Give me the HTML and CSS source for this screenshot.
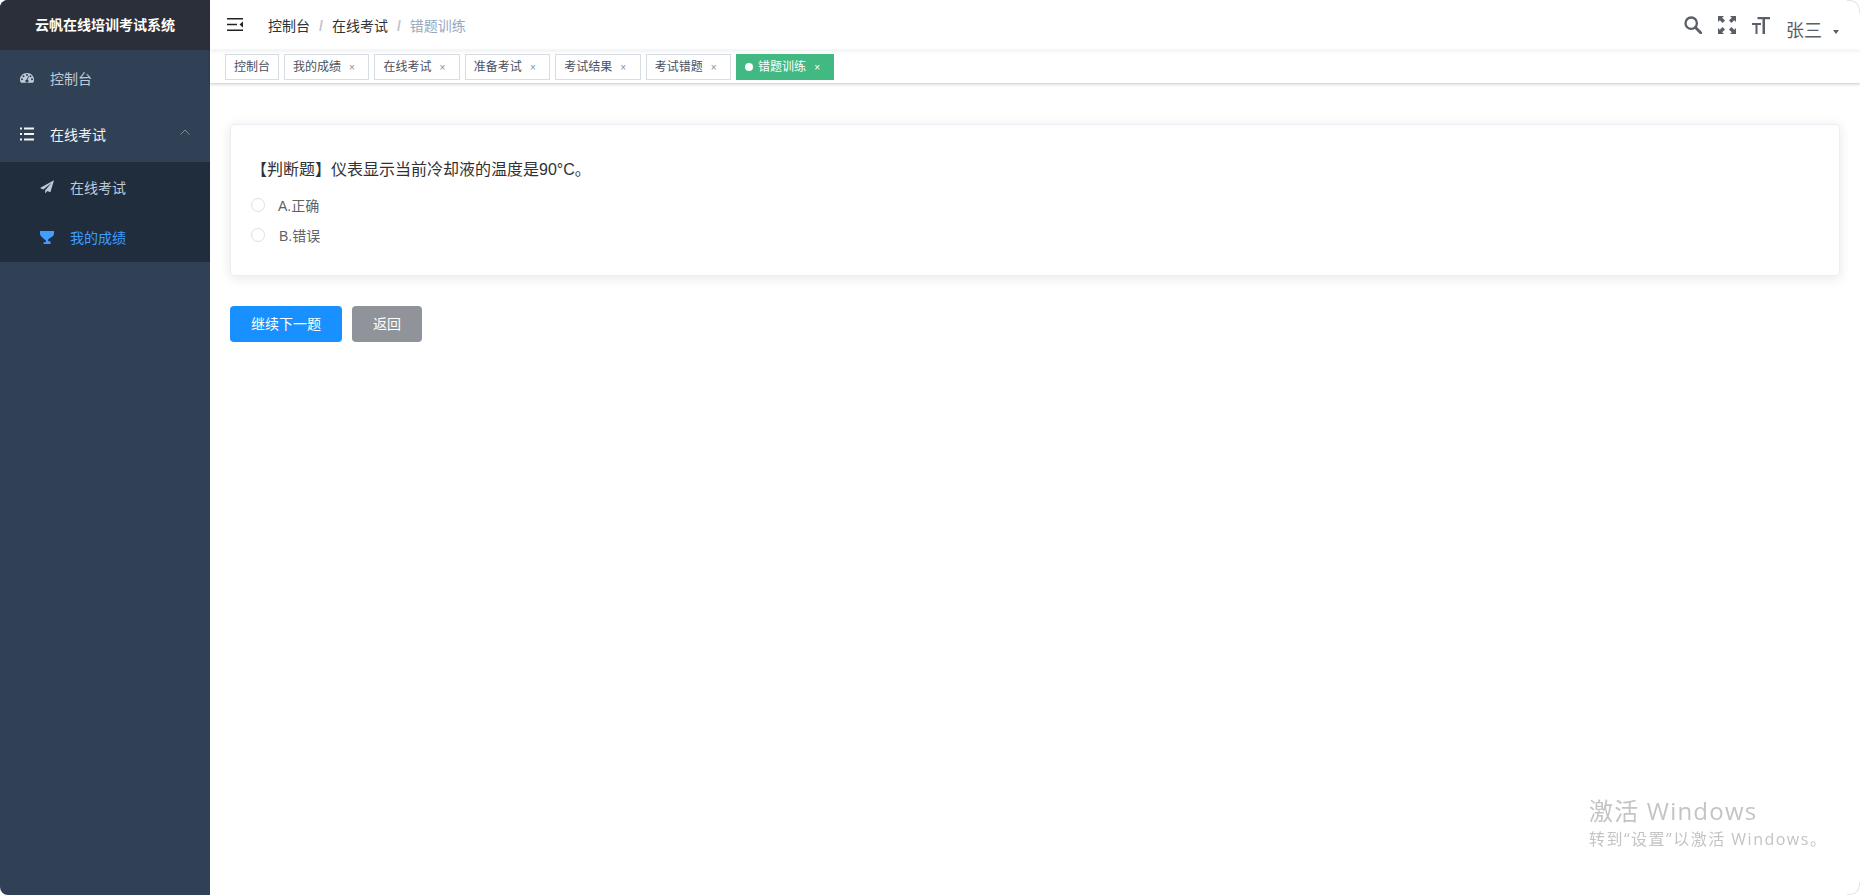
FILE: index.html
```html
<!DOCTYPE html>
<html lang="zh-CN">

<head>
    <meta charset="UTF-8">
    <title>云帆在线培训考试系统</title>
    <link rel="stylesheet" href="styles.css">
</head>

<body>
    <div class="app">
        <aside class="sidebar">
            <div class="logo">云帆在线培训考试系统</div>
            <div class="menu-item">
                <svg class="menu-icon" viewBox="0 0 14 14"><path fill-rule="evenodd" d="M7 2C3.1 2 0 4.9 0 8.6c0 1 .2 1.9.6 2.7.1.2.3.4.6.4h11.6c.3 0 .5-.2.6-.4.4-.8.6-1.700.6-2.700C14 4.900 10.900 2 7 2zM2 9.300a1 1 0 1 1 0-2 1 1 0 0 1 0 2zm1.500-3a1 1 0 1 1 0-2 1 1 0 0 1 0 2zM7 4.900a1 1 0 1 1 0-2 1 1 0 0 1 0 2zm1.600 5.400a1.700 1.700 0 0 1-3.300-.600c.1-.7.700-1.200 1.400-1.300l1.600-3.200c.1-.2.300-.3.500-.2.200.1.300.3.200.5L7.600 8.700c.8.300 1.300 1 1 1.600zM10.500 6.300a1 1 0 1 1 0-2 1 1 0 0 1 0 2zm1.500 3a1 1 0 1 1 0-2 1 1 0 0 1 0 2z"/></svg>
                <span>控制台</span>
            </div>
            <div class="menu-item menu-open">
                <svg class="menu-icon" viewBox="0 0 14 14"><path d="M0 .5h2v2H0zM4 .5h10v2H4zM0 6h2v2H0zM4 6h10v2H4zM0 11.500h2v2H0zM4 11.500h10v2H4z"/></svg>
                <span>在线考试</span>
                <svg class="chevron" viewBox="0 0 10 6"><path d="M.5 5.500 5 1l4.500 4.500" fill="none" stroke="currentColor"/></svg>
            </div>
            <div class="submenu">
                <div class="sub-item">
                    <svg class="menu-icon" viewBox="0 0 14 14"><path d="M14 .2 0 8.100l3.300 1.300L11.700 2.800 5.200 10.200v3.400l2.100-2.600 3.100 1.300z"/></svg>
                    <span>在线考试</span>
                </div>
                <div class="sub-item sub-active">
                    <svg class="menu-icon" viewBox="0 0 14 14"><path d="M0 1h14v2.600c0 2-1.500 3.600-3.500 3.800-.6.900-1.400 1.500-2.300 1.800v2.100h2.300V14H3.500v-1.700h2.300v-2.100c-.9-.3-1.700-.9-2.300-1.800C1.500 7.200 0 5.600 0 3.600z"/></svg>
                    <span>我的成绩</span>
                </div>
            </div>
        </aside>

        <div class="main">
            <header class="navbar">
                <svg class="hamburger" viewBox="0 0 16 13"><path d="M0 0h16v1.500H0zM0 5.700h10v1.500H0zM0 11.500h16V13H0zM16 3.500v6l-3.500-3z"/></svg>
                <div class="breadcrumb">
                    <span>控制台</span>
                    <i>/</i>
                    <span>在线考试</span>
                    <i>/</i>
                    <span class="crumb-last">错题训练</span>
                </div>
                <div class="nav-right">
                    <svg class="nav-icon" viewBox="0 0 18 18"><circle cx="7.200" cy="7.200" r="5.700" fill="none" stroke="currentColor" stroke-width="2.300"/><path d="m11.500 11.500 5.200 5.200" stroke="currentColor" stroke-width="2.800" stroke-linecap="round"/></svg>
                    <svg class="nav-icon" viewBox="0 0 18 18"><path d="M0 0h6L4.200 1.800 7 4.600 4.600 7 1.800 4.200 0 6zM18 0v6l-1.800-1.800L13.400 7 11 4.600l2.800-2.800L12 0zM0 18v-6l1.800 1.800L4.600 11 7 13.400l-2.800 2.800L6 18zM18 18h-6l1.800-1.800L11 13.400l2.400-2.400 2.800 2.800L18 12z"/></svg>
                    <svg class="nav-icon" viewBox="0 0 18 18"><path d="M5.500 1h12.500v2.300h-5v14.700h-2.500V3.300h-5zM0 7h9v2H5.500v9H3.500V9H0z"/></svg>
                    <span class="user-name">张三</span>
                    <span class="caret"></span>
                </div>
            </header>

            <nav class="tags">
                <div class="tag">控制台</div>
                <div class="tag">我的成绩<b>×</b></div>
                <div class="tag">在线考试<b>×</b></div>
                <div class="tag">准备考试<b>×</b></div>
                <div class="tag">考试结果<b>×</b></div>
                <div class="tag">考试错题<b>×</b></div>
                <div class="tag tag-active">错题训练<b>×</b></div>
            </nav>

            <section class="content">
                <div class="card">
                    <div class="question">【判断题】仪表显示当前冷却液的温度是90°C。</div>
                    <label class="option"><span class="radio"></span><span class="option-text">A.正确</span></label>
                    <label class="option"><span class="radio"></span><span class="option-text option-b">B.错误</span></label>
                </div>
                <div class="actions">
                    <button class="btn btn-primary">继续下一题</button>
                    <button class="btn btn-gray">返回</button>
                </div>
            </section>
        </div>
    </div>

    <div class="watermark">
        <div class="wm-title">激活 Windows</div>
        <div class="wm-sub">转到“设置”以激活 Windows。</div>
    </div>
</body>

</html>
```

FILE: styles.css
```css
html,
body {
    height: 100%;
    margin: 0;
    background: #fff;
}

body {
    font-family: "Liberation Sans", "Noto Sans CJK SC", sans-serif;
    font-size: 14px;
    overflow: hidden;
}

.app {
    display: flex;
    height: 100%;
}

/* sidebar */
.sidebar {
    width: 210px;
    flex-shrink: 0;
    background: #304156;
    color: #bfcbd9;
    border-radius: 8px 0 0 8px;
    overflow: hidden;
}

.logo {
    height: 50px;
    line-height: 50px;
    background: #2b2f3a;
    color: #fff;
    font-weight: 600;
    text-align: center;
}

.menu-item {
    height: 56px;
    display: flex;
    align-items: center;
    padding-left: 20px;
}

.menu-open {
    color: #f4f4f5;
}

.menu-icon {
    width: 14px;
    height: 14px;
    margin-right: 16px;
    fill: currentColor;
    flex-shrink: 0;
}

.chevron {
    width: 10px;
    height: 6px;
    margin-left: auto;
    margin-right: 20px;
    margin-top: -4px;
    color: #7f8c9c;
}

.submenu {
    background: #1f2d3d;
}

.sub-item {
    height: 50px;
    display: flex;
    align-items: center;
    padding-left: 40px;
}

.sub-active {
    color: #409eff;
}

/* top */
.main {
    flex: 1;
    min-width: 0;
    display: flex;
    flex-direction: column;
    position: relative;
}

/* the window's rounded corners on the right */
.main::before,
.main::after {
    content: "";
    position: absolute;
    right: 0;
    width: 12px;
    height: 12px;
    border-right: 1px solid #e4e4e4;
}

.main::before {
    top: 0;
    border-top: 1px solid #e4e4e4;
    border-top-right-radius: 10px;
}

.main::after {
    bottom: 0;
    border-bottom: 1px solid #e4e4e4;
    border-bottom-right-radius: 10px;
}

.navbar {
    height: 50px;
    flex-shrink: 0;
    display: flex;
    align-items: center;
    padding: 0 21px 0 17px;
    box-shadow: 0 1px 4px rgba(0, 21, 41, 0.08);
    position: relative;
    box-sizing: border-box;
}

.hamburger {
    width: 16px;
    height: 13px;
    margin-right: 25px;
    margin-top: -1px;
    fill: #222;
}

.breadcrumb {
    display: flex;
    align-items: baseline;
    color: #303133;
    margin-top: -1px;
}

.breadcrumb i {
    font-style: normal;
    font-weight: 700;
    color: #c0c4cc;
    margin: 0 9px;
}

.crumb-last {
    color: #97a8be;
}

.nav-right {
    margin-left: auto;
    display: flex;
    align-items: center;
    color: #5a5e66;
}

.nav-icon {
    width: 18px;
    height: 18px;
    margin-right: 16px;
    fill: currentColor;
}

.user-name {
    font-size: 18px;
    margin-top: 8px;
}

.caret {
    width: 0;
    height: 0;
    margin-left: 11px;
    margin-top: 13px;
    border-left: 3.5px solid transparent;
    border-right: 3.5px solid transparent;
    border-top: 4px solid #5a5e66;
}

/* tags */
.tags {
    height: 34px;
    flex-shrink: 0;
    display: flex;
    align-items: center;
    gap: 5px;
    padding-left: 15px;
    box-sizing: border-box;
    background: #fff;
    border-bottom: 1px solid #d8dce5;
    box-shadow: 0 1px 3px 0 rgba(0, 0, 0, 0.12), 0 0 3px 0 rgba(0, 0, 0, 0.04);
}

.tag {
    height: 26px;
    line-height: 24px;
    box-sizing: border-box;
    border: 1px solid #d8dce5;
    padding: 0 8px;
    font-size: 12px;
    color: #495060;
    background: #fff;
}

.tag b {
    display: inline-block;
    width: 10px;
    text-align: center;
    font-weight: 400;
    color: #8a8f99;
    margin-left: 6px;
    margin-right: 3.4px;
    font-size: 10px;
}

.tag-active {
    background: #42b983;
    border-color: #42b983;
    color: #fff;
}

.tag-active::before {
    content: "";
    display: inline-block;
    width: 8px;
    height: 8px;
    border-radius: 50%;
    background: #fff;
    margin-right: 5px;
}

.tag-active b {
    color: #fff;
}

/* content */
.content {
    padding: 40px 20px 0;
}

.card {
    height: 152px;
    box-sizing: border-box;
    border: 1px solid #ebeef5;
    border-radius: 4px;
    box-shadow: 0 2px 12px 0 rgba(0, 0, 0, 0.1);
    padding: 33px 20px 0;
    color: #303133;
}

.question {
    font-size: 16px;
    line-height: 24px;
    margin-bottom: 8px;
}

.option {
    height: 30px;
    display: flex;
    align-items: center;
    color: #606266;
}

.radio {
    width: 14px;
    height: 14px;
    box-sizing: border-box;
    border: 1px solid #dcdfe6;
    border-radius: 50%;
    margin-right: 13px;
}

.option-text {
    margin-top: -1px;
}

.option-b {
    padding-left: 1px;
}

.actions {
    display: flex;
    gap: 10px;
    margin-top: 30px;
}

.btn {
    height: 36px;
    padding: 0 21px 2px;
    border: none;
    border-radius: 4px;
    font-family: inherit;
    font-size: 14px;
    color: #fff;
}

.btn-primary {
    background: #1890ff;
}

.btn-gray {
    background: #909399;
}

/* overlay */
.watermark {
    position: fixed;
    left: 1589px;
    top: 795px;
    color: #c4c4c4;
    font-family: "Open Sans", "Noto Sans CJK SC", sans-serif;
}

.wm-title {
    font-size: 24px;
    line-height: 32px;
    letter-spacing: 1.2px;
}

.wm-sub {
    font-size: 16px;
    line-height: 24px;
    letter-spacing: 1.5px;
}
```
